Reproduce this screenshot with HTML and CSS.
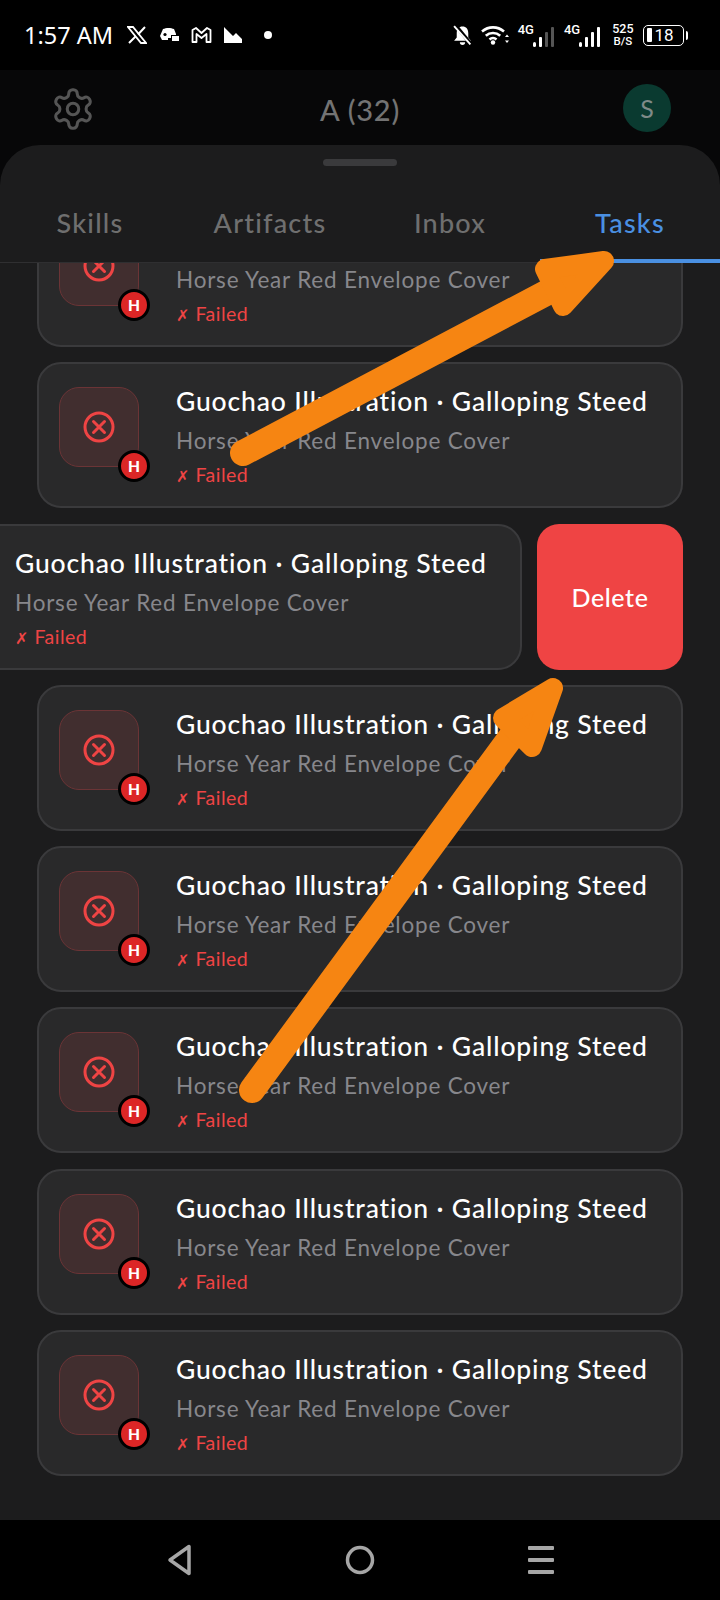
FILE: index.html
```html
<!DOCTYPE html>
<html lang="en">
<head>
<meta charset="utf-8">
<title>Tasks</title>
<link rel="stylesheet" href="styles.css">
</head>
<body>
<div class="screen">
  <div class="status">
    <div class="status-left">
      <span class="time">1:57 AM</span>
      <svg class="si" width="20" height="18" viewBox="0 0 20 18"><path d="M1 1h5l13 16h-5z" fill="none" stroke="#fff" stroke-width="1.8"/><path d="M18 1l-7 7.5M8.500 10.500L2 17" stroke="#fff" stroke-width="2" fill="none"/></svg>
      <svg class="si" width="20" height="16" viewBox="0 0 20 16"><path d="M4 2c3-1.500 8-1.500 11 0l2 5v4H9v2H3L1 9z" fill="#fff"/><circle cx="6" cy="7.500" r="1.600" fill="#000"/><rect x="12" y="8" width="8" height="4" fill="#000"/><rect x="13" y="9" width="7" height="5" fill="#fff"/></svg>
      <svg class="si" width="21" height="16" viewBox="0 0 21 16"><path d="M1.500 15V3L5 1l5.500 5L16 1l3.500 2v12h-4V7l-5 4-5-4v8z" fill="none" stroke="#fff" stroke-width="1.800" stroke-linejoin="round"/></svg>
      <svg class="si" width="18" height="16" viewBox="0 0 18 16"><path d="M0 0l9 9 3-3 6 6v4H0z" fill="#fff"/></svg>
      <span class="sdot"></span>
    </div>
    <div class="status-right">
      <svg class="si" width="19" height="21" viewBox="0 0 18 20"><path d="M9 1.500c3.500 0 5.500 2.500 5.500 6.500v4l2.500 3H1l2.500-3V8C3.500 4 5.500 1.500 9 1.500z" fill="#fff"/><path d="M6.500 16.500h5a2.500 2.500 0 0 1-5 0z" fill="#fff"/><path d="M2.500 0.500l14 17" stroke="#000" stroke-width="3.500"/><path d="M1 1l15.500 17.500" stroke="#fff" stroke-width="1.800"/></svg>
      <svg class="si wifi" width="28" height="20" viewBox="0 0 28 20"><path d="M1 6.500c6.500-5.500 15.500-5.500 22 0M4.800 10.800c4.200-3.700 10.200-3.700 14.400 0M8.500 14.500c2-1.800 5-1.800 7 0" fill="none" stroke="#fff" stroke-width="2.600"/><circle cx="12" cy="17.500" r="2.200" fill="#fff"/><path d="M26 9.500l-2 2.500h4zM26 18l-2-2.500h4z" fill="#fff"/></svg>
      <div class="net"><span class="g">4G</span><svg width="22" height="20" viewBox="0 0 22 20"><rect x="0" y="15" width="3" height="5" rx="1.500" fill="#fff"/><rect x="6" y="10" width="3" height="10" rx="1" fill="#fff"/><rect x="12" y="5" width="3" height="15" rx="1" fill="#555"/><rect x="18" y="0" width="3" height="20" rx="1" fill="#555"/></svg></div>
      <div class="net"><span class="g">4G</span><svg width="22" height="20" viewBox="0 0 22 20"><rect x="0" y="15" width="3" height="5" rx="1.500" fill="#fff"/><rect x="6" y="10" width="3" height="10" rx="1" fill="#fff"/><rect x="12" y="5" width="3" height="15" rx="1" fill="#fff"/><rect x="18" y="0" width="3" height="20" rx="1" fill="#fff"/></svg></div>
      <div class="speed"><span>525</span><span class="unit">B/S</span></div>
      <div class="batt-wrap">
        <div class="batt"><span class="fill"></span><span class="lvl">18</span></div>
        <span class="nub"></span>
      </div>
    </div>
  </div>

  <div class="app-head">
    <svg class="gear" width="46" height="46" viewBox="0 0 24 24" fill="none" stroke="#555" stroke-width="1.600" stroke-linecap="round" stroke-linejoin="round"><path d="M12.220 2h-.440a2 2 0 0 0-2 2v.180a2 2 0 0 1-1 1.730l-.430.250a2 2 0 0 1-2 0l-.150-.080a2 2 0 0 0-2.730.730l-.220.380a2 2 0 0 0 .730 2.730l.150.100a2 2 0 0 1 1 1.720v.510a2 2 0 0 1-1 1.740l-.150.090a2 2 0 0 0-.730 2.730l.220.380a2 2 0 0 0 2.730.730l.150-.080a2 2 0 0 1 2 0l.430.250a2 2 0 0 1 1 1.730V20a2 2 0 0 0 2 2h.440a2 2 0 0 0 2-2v-.180a2 2 0 0 1 1-1.730l.430-.250a2 2 0 0 1 2 0l.150.080a2 2 0 0 0 2.730-.730l.220-.390a2 2 0 0 0-.730-2.730l-.150-.080a2 2 0 0 1-1-1.740v-.500a2 2 0 0 1 1-1.740l.150-.090a2 2 0 0 0 .730-2.730l-.220-.380a2 2 0 0 0-2.730-.730l-.150.080a2 2 0 0 1-2 0l-.430-.250a2 2 0 0 1-1-1.730V4a2 2 0 0 0-2-2z"/><circle cx="12" cy="12" r="3"/></svg>
    <span class="app-title">A (32)</span>
    <span class="avatar">S</span>
  </div>

  <div class="sheet">
    <div class="handle"></div>
    <div class="tabs">
      <span class="tab">Skills</span>
      <span class="tab">Artifacts</span>
      <span class="tab">Inbox</span>
      <span class="tab active">Tasks</span>
    </div>
    <div class="list">
      <div class="list-inner">
        <div class="row"><div class="card"><div class="tile"><svg width="36" height="36" viewBox="0 0 36 36" fill="none" stroke="#ef4444" stroke-width="3" stroke-linecap="round"><circle cx="18" cy="18" r="14"/><path d="M12.500 12.500l11 11M23.500 12.500l-11 11"/></svg><span class="badge">H</span></div><div class="txt"><div class="t under-tabs">Guochao Illustration · Galloping Steed</div><div class="s">Horse Year Red Envelope Cover</div><div class="f"><span class="fx">✗</span> Failed</div></div></div></div>
        <div class="row"><div class="card"><div class="tile"><svg width="36" height="36" viewBox="0 0 36 36" fill="none" stroke="#ef4444" stroke-width="3" stroke-linecap="round"><circle cx="18" cy="18" r="14"/><path d="M12.500 12.500l11 11M23.500 12.500l-11 11"/></svg><span class="badge">H</span></div><div class="txt"><div class="t">Guochao Illustration · Galloping Steed</div><div class="s">Horse Year Red Envelope Cover</div><div class="f"><span class="fx">✗</span> Failed</div></div></div></div>
        <div class="row"><div class="card swiped"><div class="tile offscreen"></div><div class="txt"><div class="t">Guochao Illustration · Galloping Steed</div><div class="s">Horse Year Red Envelope Cover</div><div class="f"><span class="fx">✗</span> Failed</div></div></div><div class="delete">Delete</div></div>
        <div class="row"><div class="card"><div class="tile"><svg width="36" height="36" viewBox="0 0 36 36" fill="none" stroke="#ef4444" stroke-width="3" stroke-linecap="round"><circle cx="18" cy="18" r="14"/><path d="M12.500 12.500l11 11M23.500 12.500l-11 11"/></svg><span class="badge">H</span></div><div class="txt"><div class="t">Guochao Illustration · Galloping Steed</div><div class="s">Horse Year Red Envelope Cover</div><div class="f"><span class="fx">✗</span> Failed</div></div></div></div>
        <div class="row"><div class="card"><div class="tile"><svg width="36" height="36" viewBox="0 0 36 36" fill="none" stroke="#ef4444" stroke-width="3" stroke-linecap="round"><circle cx="18" cy="18" r="14"/><path d="M12.500 12.500l11 11M23.500 12.500l-11 11"/></svg><span class="badge">H</span></div><div class="txt"><div class="t">Guochao Illustration · Galloping Steed</div><div class="s">Horse Year Red Envelope Cover</div><div class="f"><span class="fx">✗</span> Failed</div></div></div></div>
        <div class="row"><div class="card"><div class="tile"><svg width="36" height="36" viewBox="0 0 36 36" fill="none" stroke="#ef4444" stroke-width="3" stroke-linecap="round"><circle cx="18" cy="18" r="14"/><path d="M12.500 12.500l11 11M23.500 12.500l-11 11"/></svg><span class="badge">H</span></div><div class="txt"><div class="t">Guochao Illustration · Galloping Steed</div><div class="s">Horse Year Red Envelope Cover</div><div class="f"><span class="fx">✗</span> Failed</div></div></div></div>
        <div class="row"><div class="card"><div class="tile"><svg width="36" height="36" viewBox="0 0 36 36" fill="none" stroke="#ef4444" stroke-width="3" stroke-linecap="round"><circle cx="18" cy="18" r="14"/><path d="M12.500 12.500l11 11M23.500 12.500l-11 11"/></svg><span class="badge">H</span></div><div class="txt"><div class="t">Guochao Illustration · Galloping Steed</div><div class="s">Horse Year Red Envelope Cover</div><div class="f"><span class="fx">✗</span> Failed</div></div></div></div>
        <div class="row"><div class="card"><div class="tile"><svg width="36" height="36" viewBox="0 0 36 36" fill="none" stroke="#ef4444" stroke-width="3" stroke-linecap="round"><circle cx="18" cy="18" r="14"/><path d="M12.500 12.500l11 11M23.500 12.500l-11 11"/></svg><span class="badge">H</span></div><div class="txt"><div class="t">Guochao Illustration · Galloping Steed</div><div class="s">Horse Year Red Envelope Cover</div><div class="f"><span class="fx">✗</span> Failed</div></div></div></div>
      </div>
    </div>
  </div>

  <div class="navbar">
    <svg width="26" height="32" viewBox="0 0 26 32" fill="none" stroke="#a6a6a6" stroke-width="3.500" stroke-linejoin="round"><path d="M22 2.500v27L3 16z"/></svg>
    <svg width="30" height="30" viewBox="0 0 30 30" fill="none" stroke="#a6a6a6" stroke-width="3.500"><circle cx="15" cy="15" r="12.500"/></svg>
    <svg width="28" height="30" viewBox="0 0 28 30" fill="#a6a6a6"><rect x="1" y="1" width="26" height="4" rx="1"/><rect x="1" y="13" width="26" height="4" rx="1"/><rect x="1" y="25" width="26" height="4" rx="1"/></svg>
  </div>

  <svg class="arrows" width="720" height="1600" viewBox="0 0 720 1600">
    <path class="shaft" d="M243 453L565 283"/>
    <path class="head" d="M545 269L604 261L563 306z"/>
    <path class="shaft" d="M252 1090L522 722"/>
    <path class="head" d="M553 688L532 747L503 718z"/>
  </svg>
</div>
</body>
</html>
```

FILE: styles.css
```css
* { box-sizing: border-box; }
html, body { margin: 0; padding: 0; background: #000; }
body { font-family: "Lato", "Inter", sans-serif; }

.screen {
  position: relative;
  width: 720px;
  height: 1600px;
  overflow: hidden;
  display: flex;
  flex-direction: column;
  background: #070708;
}

.status {
  height: 70px;
  flex: none;
  background: #000;
  display: flex;
  justify-content: space-between;
  align-items: center;
  padding: 0 32px 0 24px;
  color: #fff;
  font-family: "Roboto", sans-serif;
}
.status-left, .status-right { display: flex; align-items: center; }
.time { font-size: 23.500px; font-family: "Noto Sans", sans-serif; width: 103px; }
.status-left .si { margin-right: 12px; display: block; }
.sdot { width: 8px; height: 8px; border-radius: 50%; background: #fff; margin-left: 10px; }
.status-right { gap: 9px; }
.si { display: block; }
.net { display: flex; align-items: flex-end; height: 24px; position: relative; }
.net .g { font-size: 13px; line-height: 14px; font-weight: 500; margin-right: -1px; align-self: flex-start; }
.net svg { display: block; margin-top: 4px; }
.speed { display: flex; flex-direction: column; align-items: center; font-size: 12.500px; line-height: 12px; font-weight: 500; margin-left: 2px; }
.speed .unit { font-size: 11.500px; }
.batt-wrap { display: flex; align-items: center; gap: 2px; }
.batt {
  width: 41px; height: 21px;
  border: 1.500px solid #fff;
  border-radius: 5px;
  display: flex; align-items: center;
  padding-left: 3px;
  gap: 3px;
}
.batt .fill { width: 5px; height: 14px; background: #fff; border-radius: 1px; }
.batt .lvl { font-size: 17px; line-height: 17px; }
.nub { width: 2.500px; height: 9px; background: #fff; border-radius: 0 2px 2px 0; }

.app-head {
  height: 75px;
  flex: none;
  position: relative;
  display: flex;
  align-items: center;
  justify-content: space-between;
  padding: 0 49px 0 50px;
}
.gear { display: block; margin-top: 2px; }
.app-title {
  position: absolute;
  left: 0; right: 0;
  text-align: center;
  color: #737373;
  font-size: 29px;
  font-weight: 500;
  letter-spacing: 0.800px;
  margin-top: 3px;
}
.avatar {
  width: 48px; height: 48px;
  border-radius: 50%;
  background: #0a3a30;
  color: #7f8a88;
  font-size: 25px;
  margin-top: 1px;
  display: flex; align-items: center; justify-content: center;
}

.sheet {
  flex: 1;
  min-height: 0;
  background: #1c1c1d;
  border-radius: 40px 40px 0 0;
  display: flex;
  flex-direction: column;
  overflow: hidden;
}
.handle {
  width: 74px; height: 7px;
  border-radius: 4px;
  background: #3a3a3c;
  margin: 14px auto 0;
  flex: none;
}
.tabs {
  height: 97px;
  flex: none;
  display: grid;
  grid-template-columns: repeat(4, 180px);
  border-bottom: 1px solid #2f2f31;
}
.tab {
  display: flex;
  align-items: center;
  justify-content: center;
  padding-top: 15px;
  color: #6f6f6f;
  font-size: 27px;
  font-weight: 500;
  letter-spacing: 1.200px;
}
.tab.active {
  color: #4a90e2;
  border-bottom: 4px solid #4a90e2;
  height: 97px;
  padding-top: 19px;
}
.list { flex: 1; min-height: 0; overflow: hidden; }
.list-inner {
  margin-top: -62px;
  padding: 0 37px;
  display: flex;
  flex-direction: column;
  gap: 15.300px;
}
.row { position: relative; height: 146px; }
.card {
  height: 100%;
  background: #29292a;
  border: 2px solid #3a3a3c;
  border-radius: 24px;
  display: flex;
  padding: 23px 0 0 20px;
  gap: 37px;
}
.card.swiped { transform: translateX(-161px); }
.tile {
  position: relative;
  width: 80px; height: 80px;
  flex: none;
  background: #412e2f;
  border: 1.500px solid #6b3436;
  border-radius: 20px;
  display: flex; align-items: center; justify-content: center;
}
.tile.offscreen { visibility: hidden; }
.tile svg { display: block; }
.badge {
  position: absolute;
  right: -12px; bottom: -16px;
  width: 32px; height: 32px;
  border-radius: 50%;
  background: #dc2626;
  border: 3px solid #000;
  color: #fff;
  font-size: 15.500px;
  font-weight: 900;
  display: flex; align-items: center; justify-content: center;
}
.txt { white-space: nowrap; }
.t { color: #fff; font-size: 26.500px; line-height: 32px; letter-spacing: 0.850px; font-weight: 500; margin-top: -2px; }
.t.under-tabs { visibility: hidden; }
.s { color: #87878c; font-size: 22.500px; line-height: 30px; margin-top: 9px; letter-spacing: 0.800px; }
.f { color: #ef4444; font-size: 19.500px; line-height: 24px; margin-top: 7px; letter-spacing: 0.500px; }
.fx { font-family: "DejaVu Sans", sans-serif; font-size: 16px; }
.delete {
  position: absolute;
  right: 0; top: 0;
  width: 146px; height: 146px;
  background: #ef4444;
  border-radius: 22px;
  color: #fff;
  font-size: 25px;
  font-weight: 500;
  letter-spacing: 0.600px;
  display: flex; align-items: center; justify-content: center;
}

.navbar {
  height: 80px;
  flex: none;
  background: #000;
  display: flex;
  align-items: center;
  justify-content: space-between;
  padding: 0 165px 0 167px;
}
.navbar svg { display: block; }

.arrows { position: absolute; left: 0; top: 0; pointer-events: none; }
.shaft { fill: none; stroke: #f68512; stroke-width: 26; stroke-linecap: round; }
.head { fill: #f68512; stroke: #f68512; stroke-width: 20; stroke-linejoin: round; }
```
